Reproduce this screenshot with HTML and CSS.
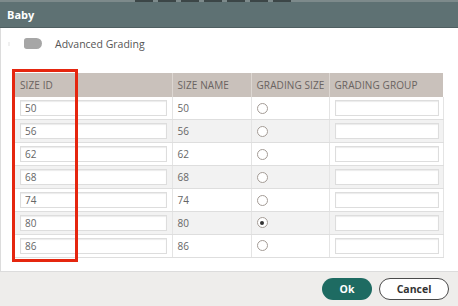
FILE: index.html
```html
<!DOCTYPE html>
<html lang="en">
<head>
    <meta charset="UTF-8">
    <meta name="viewport" content="width=device-width, initial-scale=1.0">
    <title>Baby</title>
    <link rel="stylesheet" href="styles.css">
</head>
<body>
    <div class="dialog">
        <div class="top-strip">
            <span></span><span></span><span></span><span></span><span></span><span></span><span></span>
        </div>
        <div class="title-bar">Baby</div>

        <div class="content">
            <div class="toggle-row">
                <span class="dot"></span>
                <span class="toggle"></span>
                <span class="toggle-label">Advanced Grading</span>
            </div>

            <div class="table-wrap">
                <table class="grid">
                    <thead>
                        <tr>
                            <th class="col-id">SIZE ID</th>
                            <th class="col-name">SIZE NAME</th>
                            <th class="col-size">GRADING SIZE</th>
                            <th class="col-group">GRADING GROUP</th>
                        </tr>
                    </thead>
                    <tbody>
                        <tr>
                            <td><input class="id-input" type="text" value="50"></td>
                            <td>50</td>
                            <td><span class="radio"></span></td>
                            <td><input class="group-input" type="text"></td>
                        </tr>
                        <tr>
                            <td><input class="id-input" type="text" value="56"></td>
                            <td>56</td>
                            <td><span class="radio"></span></td>
                            <td><input class="group-input" type="text"></td>
                        </tr>
                        <tr>
                            <td><input class="id-input" type="text" value="62"></td>
                            <td>62</td>
                            <td><span class="radio"></span></td>
                            <td><input class="group-input" type="text"></td>
                        </tr>
                        <tr>
                            <td><input class="id-input" type="text" value="68"></td>
                            <td>68</td>
                            <td><span class="radio"></span></td>
                            <td><input class="group-input" type="text"></td>
                        </tr>
                        <tr>
                            <td><input class="id-input" type="text" value="74"></td>
                            <td>74</td>
                            <td><span class="radio"></span></td>
                            <td><input class="group-input" type="text"></td>
                        </tr>
                        <tr>
                            <td><input class="id-input" type="text" value="80"></td>
                            <td>80</td>
                            <td><span class="radio checked"></span></td>
                            <td><input class="group-input" type="text"></td>
                        </tr>
                        <tr>
                            <td><input class="id-input" type="text" value="86"></td>
                            <td>86</td>
                            <td><span class="radio"></span></td>
                            <td><input class="group-input" type="text"></td>
                        </tr>
                    </tbody>
                </table>
                <div class="highlight"></div>
            </div>
        </div>

        <div class="footer">
            <button class="ok-btn">Ok</button>
            <button class="cancel-btn">Cancel</button>
        </div>
    </div>
</body>
</html>
```

FILE: styles.css
```css
* {
    margin: 0;
    padding: 0;
    box-sizing: border-box;
}

body {
    font-family: "Open Sans", "Liberation Sans", sans-serif;
    width: 458px;
    height: 306px;
    overflow: hidden;
    background: #ffffff;
}

.dialog {
    display: flex;
    flex-direction: column;
    height: 306px;
}

.top-strip {
    display: flex;
    gap: 5px;
    height: 2px;
    padding-left: 135px;
    background: #7d8a8b;
}

.top-strip span {
    width: 18px;
    height: 2px;
    background: #3c4647;
}

.title-bar {
    height: 26px;
    display: flex;
    align-items: center;
    padding-left: 7px;
    background: #5e7173;
    border-bottom: 1px solid #4f5f61;
    color: #ffffff;
    font-size: 11px;
    font-weight: bold;
}

.content {
    flex: 1;
    border-left: 1px solid #dcdcdc;
    padding: 10px 0 0 12px;
}

.toggle-row {
    display: flex;
    align-items: center;
    height: 11px;
}

.dot {
    width: 2px;
    height: 4px;
    background: #f0f0f0;
    margin-left: -5px;
}

.toggle {
    width: 18px;
    height: 11px;
    margin-left: 14px;
    background: #a6a6a6;
    border-radius: 3px 6px 6px 3px;
}

.toggle-label {
    margin-left: 13px;
    font-size: 10.5px;
    color: #555555;
}

.table-wrap {
    position: relative;
    margin-top: 24px;
    width: 430px;
}

.grid {
    border-collapse: collapse;
    width: 430px;
    table-layout: fixed;
    font-size: 10px;
    color: #666666;
}

.grid th {
    height: 24px;
    background: #c9c1bb;
    font-weight: normal;
    text-align: left;
    padding-left: 5px;
    border-left: 1px solid #ddd7d2;
    color: #6a6361;
    letter-spacing: 0.1px;
}

.grid th.col-id {
    padding-left: 7px;
    border-left: none;
}

.col-id { width: 159px; }
.col-name { width: 79px; }
.col-size { width: 78px; }
.col-group { width: 114px; }

.grid td {
    height: 22.9px;
    padding: 0 5px;
    border-bottom: 1px solid #dedede;
    border-left: 1px solid #e4e4e4;
    vertical-align: middle;
}

.grid td:first-child {
    padding-left: 7px;
    border-left: none;
}

.grid td:last-child {
    border-right: 1px solid #e4e4e4;
}

.grid tbody tr:nth-child(even) td {
    background: #f2f2f2;
}

.id-input,
.group-input {
    display: block;
    height: 16px;
    border: 1px solid #dddddd;
    box-shadow: inset 0 1px 1px #ececec;
    background: #ffffff;
    font-family: inherit;
    font-size: 10px;
    color: #666666;
    padding-left: 4px;
    outline: none;
}

.id-input {
    width: 147px;
}

.group-input {
    width: 104px;
}

.radio {
    display: block;
    width: 11px;
    height: 11px;
    border: 1px solid #a49c96;
    border-radius: 50%;
    background: #ffffff;
    margin-left: 0;
    position: relative;
}

.radio.checked::after {
    content: "";
    position: absolute;
    left: 2.5px;
    top: 2.5px;
    width: 4px;
    height: 4px;
    border-radius: 50%;
    background: #333333;
}

.highlight {
    position: absolute;
    left: -1px;
    top: -4px;
    width: 66px;
    height: 193px;
    border: 3px solid #e5260f;
    pointer-events: none;
}

.footer {
    height: 35px;
    display: flex;
    justify-content: flex-end;
    align-items: center;
    gap: 7px;
    padding: 0 9px 1px 0;
    background: #eeedeb;
    border-top: 1px solid #dcdcdc;
}

button {
    height: 22px;
    border-radius: 9999px;
    font-family: inherit;
    font-size: 10.5px;
    font-weight: bold;
    cursor: pointer;
}

.ok-btn {
    width: 50px;
    border: none;
    background: #1e6b62;
    color: #ffffff;
}

.cancel-btn {
    width: 70px;
    border: 1px solid #4a4a4a;
    background: #ffffff;
    color: #333333;
}
```
